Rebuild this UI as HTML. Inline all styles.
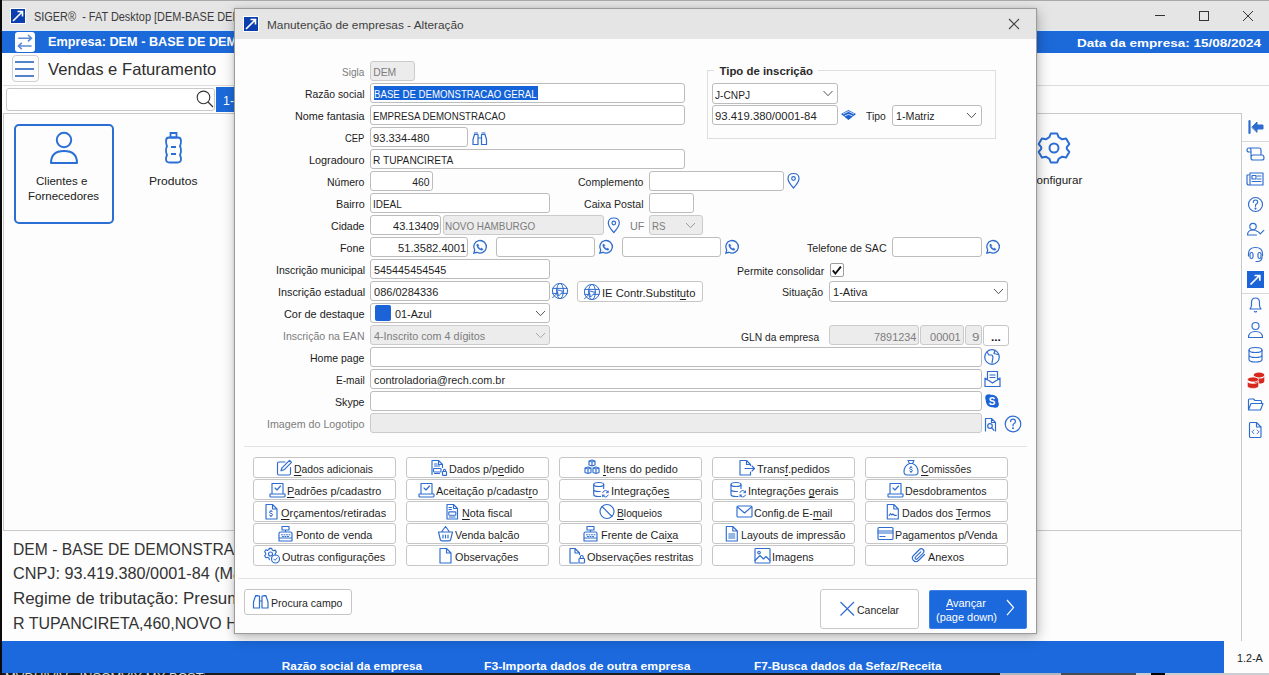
<!DOCTYPE html>
<html><head><meta charset="utf-8">
<style>
*{box-sizing:border-box;margin:0;padding:0}
html,body{width:1269px;height:675px;overflow:hidden;background:#fdfdfd;font-family:"Liberation Sans",sans-serif;color:#1f1f1f}
.a{position:absolute}
.t{position:absolute;white-space:pre;line-height:1;font-family:"Liberation Sans",sans-serif}
.t u{text-decoration-thickness:1px;text-underline-offset:1.5px}
svg.ov{position:absolute;left:0;top:0;width:1269px;height:675px;overflow:visible}
.in{position:absolute;border:1px solid #bcbcbc;border-radius:3px;background:#fff}
.dis{background:#ececec;border-color:#cbcbcb}
.btn{position:absolute;border:1px solid #c6c6c6;border-radius:3px;background:#fff}
</style></head><body>
<!-- ============ MAIN WINDOW ============ -->
<div class="a" style="left:0;top:0;width:1269px;height:31px;background:#e5e5e5;border-top:1px solid #a9a9a9"></div>
<div class="a" style="left:0;top:30px;width:1269px;height:1px;background:#d9eefa"></div>
<div class="a" style="left:0;top:31px;width:1269px;height:1px;background:#2458b4"></div>
<div class="a" style="left:0;top:31px;width:1269px;height:22px;background:#1c6ad9"></div>
<div class="a" style="left:3px;top:85px;width:1266px;height:1px;background:#dcdcdc"></div>
<div class="a" style="left:12px;top:55px;width:27px;height:27px;border:1px solid #cfcfcf;border-radius:4px;background:#fdfdfd"></div>
<div class="a" style="left:15px;top:61px;width:19px;height:2px;background:#5582cf"></div>
<div class="a" style="left:15px;top:68px;width:19px;height:2px;background:#5582cf"></div>
<div class="a" style="left:15px;top:75px;width:19px;height:2px;background:#5582cf"></div>
<div class="a" style="left:6px;top:88px;width:209px;height:23px;border:1px solid #c8c8c8;border-radius:3px;background:#fff"></div>
<div class="a" style="left:216px;top:87px;width:60px;height:25px;background:#1c6ad9"></div>
<div class="a" style="left:3px;top:113px;width:1239px;height:418px;border:1px solid #c9c9c9;background:#fdfdfd"></div>
<div class="a" style="left:14px;top:124px;width:100px;height:100px;border:2px solid #2b6fd5;border-radius:5px"></div>
<div class="a" style="left:1242px;top:141px;width:27px;height:1px;background:#d8d8d8"></div>
<div class="a" style="left:1242px;top:293px;width:27px;height:1px;background:#d8d8d8"></div>
<div class="a" style="left:1241px;top:113px;width:1px;height:528px;background:#c9c9c9"></div>
<div class="a" style="left:0;top:641px;width:1224px;height:32px;background:#1b69dc"></div>
<div class="a" style="left:1224px;top:641px;width:45px;height:32px;background:#fdfdfd"></div>
<div class="a" style="left:0;top:673px;width:1000px;height:2px;background:#1c1c1c"></div>
<div class="a" style="left:5px;top:673px;width:200px;height:2px;overflow:hidden"><span class="t" style="left:0;top:0;font-size:13px;color:#d8d8d8;transform:translateY(-2px)">MVDUIVIV - INSCMVIX MX BCSTUUS</span></div>
<div class="a" style="left:1000px;top:673px;width:61px;height:2px;background:#aeb6c4"></div>
<div class="a" style="left:1061px;top:673px;width:75px;height:2px;background:#474d55"></div>
<div class="a" style="left:1136px;top:673px;width:15px;height:2px;background:#c9cdd4"></div>
<div class="a" style="left:1151px;top:673px;width:14px;height:2px;background:#050505"></div>
<div class="a" style="left:1165px;top:673px;width:104px;height:2px;background:#c9ccd1"></div>
<div class="a" style="left:0;top:0;width:2px;height:675px;background:#0b0b0b"></div>

<svg class="ov" viewBox="0 0 1269 675">
 <!-- title icon -->
 <rect x="10.5" y="8.5" width="15" height="15" fill="#0c3fae" stroke="#fff" stroke-width="1"/>
 <path d="M13 21 L22.5 11.5 M17.5 11.5 H22.5 V16.5" stroke="#fff" stroke-width="1.6" fill="none"/>
 <!-- window controls -->
 <path d="M1155 15.5 H1165" stroke="#333" stroke-width="1"/>
 <rect x="1199.5" y="11.5" width="9" height="9" fill="none" stroke="#333" stroke-width="1"/>
 <path d="M1243 11 L1253 21 M1253 11 L1243 21" stroke="#333" stroke-width="1"/>
 <!-- swap icon -->
 <rect x="15" y="32" width="20" height="20" rx="3" fill="#fff"/>
 <path d="M18.2 38.2 H31.2 M28 35 L31.4 38.2 L28 41.4" stroke="#5b8ad8" stroke-width="1.6" fill="none"/>
 <path d="M31.6 46 H18.6 M21.8 42.8 L18.4 46 L21.8 49.2" stroke="#5b8ad8" stroke-width="1.6" fill="none"/>
 <!-- search -->
 <circle cx="203.5" cy="97.4" r="6.3" fill="none" stroke="#333" stroke-width="1.1"/>
 <path d="M208 102 L213 107" stroke="#333" stroke-width="1.2"/>
 <!-- person card icon -->
 <circle cx="64" cy="140" r="7.2" fill="none" stroke="#2b6fd5" stroke-width="2"/>
 <path d="M51 163 Q51 151 64 151 Q77 151 77 163 Z" fill="none" stroke="#2b6fd5" stroke-width="2" stroke-linejoin="round"/>
 <!-- bottle -->
 <path d="M170.5 133 h6 v4.5 h-6 z" fill="none" stroke="#2b6fd5" stroke-width="1.8"/>
 <path d="M169 137.5 h9 q3 0 3 3.5 q0 3 -1 5 q1 2 1 5 q0 2 -1 4 q1 2 1 4 q0 3.5 -3.5 3.5 h-8 q-3.5 0 -3.5 -3.5 q0 -2 1 -4 q-1 -2 -1 -4 q0 -3 1 -5 q-1 -2 -1 -5 q0 -3.5 3 -3.5 z" fill="none" stroke="#2b6fd5" stroke-width="1.8"/>
 <path d="M171 147 h5 M171 154 h5" stroke="#2b6fd5" stroke-width="1.8"/>
 <!-- gear -->
 <g transform="translate(1054 148)" fill="none" stroke="#2b6fd5" stroke-width="2" stroke-linejoin="round">
  <path d="M-3.2 -14.5 L3.2 -14.5 L4.6 -10.8 L8.2 -8.7 L12.1 -9.4 L15.3 -3.9 L12.8 -0.8 L12.8 0.8 L15.3 3.9 L12.1 9.4 L8.2 8.7 L4.6 10.8 L3.2 14.5 L-3.2 14.5 L-4.6 10.8 L-8.2 8.7 L-12.1 9.4 L-15.3 3.9 L-12.8 0.8 L-12.8 -0.8 L-15.3 -3.9 L-12.1 -9.4 L-8.2 -8.7 L-4.6 -10.8 Z"/>
  <circle r="4.5"/>
 </g>
 <!-- sidebar icons -->
 <g fill="none" stroke="#2f6ccf" stroke-width="1.15" stroke-linejoin="round" stroke-linecap="round">
  <path d="M1249.5 121 V133" stroke-width="2.2"/>
  <path d="M1252 127 L1257 122 V125 H1263 V129 H1257 V132 Z" fill="#2f6ccf" stroke-width="1"/>
  <!-- scroll -->
  <path d="M1249 148 h10 q2 0 2 2 v5 M1249 148 q-2 0 -2 2 q0 2 2 2 h2 v6 q0 2 2 2 h9 q2 0 2 -2 q0 -3 -2 -3 h-9 q-2 0 -2 3 M1249 148 q2 0 2 2 v2"/>
  <!-- newspaper -->
  <path d="M1250 173 h13 v12 h-14 q-2 0 -2 -2 v-8 h3 z M1250 176 v9 M1252 175.5 h4 v3.5 h-4 z M1257.5 176 h3.5 M1257.5 179 h3.5 M1252 181.5 h9"/>
  <!-- help -->
  <circle cx="1255.5" cy="204.5" r="7"/>
  <path d="M1253.3 202.3 q0 -2.3 2.2 -2.3 q2.2 0 2.2 2.1 q0 1.4 -1.4 2 q-0.8 0.4 -0.8 1.6 v0.6"/>
  <circle cx="1255.5" cy="208.6" r="0.5" fill="#2f6ccf"/>
  <!-- person check -->
  <circle cx="1253" cy="226.5" r="3.2"/>
  <path d="M1247.5 235 q0 -5 5.5 -5 q3 0 4.5 1.5 M1247.5 235 h9"/>
  <path d="M1258.5 232 l1.8 1.8 l3.5 -3.5"/>
  <!-- headset -->
  <path d="M1248.5 256 v-2 q0 -6.5 7 -6.5 q7 0 7 6.5 v2"/>
  <rect x="1250" y="252.5" width="3" height="6" rx="1.5"/>
  <rect x="1258" y="252.5" width="3" height="6" rx="1.5"/>
  <path d="M1262 257 q0 4 -4 4.5 h-2"/>
  <!-- bell -->
  <path d="M1250 309 q1.5 -1.5 1.5 -4 v-2.5 q0 -4.5 4 -4.5 q4 0 4 4.5 v2.5 q0 2.5 1.5 4 z M1254.5 311.5 q1 1 2 0"/>
  <!-- person -->
  <circle cx="1255.5" cy="326" r="3.5"/>
  <path d="M1248.5 337.5 q0 -6 7 -6 q7 0 7 6 z"/>
  <!-- db -->
  <ellipse cx="1255.5" cy="350" rx="6.5" ry="2.5"/>
  <path d="M1249 350 v9.5 q0 2.5 6.5 2.5 q6.5 0 6.5 -2.5 v-9.5 M1249 355 q0 2.5 6.5 2.5 q6.5 0 6.5 -2.5"/>
  <!-- folder -->
  <path d="M1248.5 410 v-10 q0 -1 1 -1 h4 l1.5 1.5 h5.5 q1 0 1 1 v2 M1248.5 410 l2.5 -6.5 h12 l-2.5 6.5 z"/>
  <!-- file code -->
  <path d="M1250.5 422.5 h6 l4.5 4.5 v9.5 q0 1 -1 1 h-9.5 q-1 0 -1 -1 v-13 q0 -1 1 -1 z M1256.5 422.5 v4.5 h4.5"/>
  <path d="M1253.8 430 l-1.8 1.8 l1.8 1.8 M1257.2 430 l1.8 1.8 l-1.8 1.8" stroke-width="1"/>
 </g>
 <!-- sidebar blue arrow -->
 <rect x="1247" y="271" width="17" height="17" fill="#1b63d6"/>
 <path d="M1250.5 284.5 L1259.5 275.5 M1254.5 275.5 H1259.8 V280.8" stroke="#fff" stroke-width="1.7" fill="none"/>
 <!-- coins -->
 <g fill="#d6281e">
  <ellipse cx="1259" cy="375" rx="5.3" ry="2.6"/>
  <path d="M1253.7 376 v5 q0 2.6 5.3 2.6 q5.3 0 5.3 -2.6 v-5 q0 2.6 -5.3 2.6 q-5.3 0 -5.3 -2.6z"/>
  <ellipse cx="1253" cy="379.5" rx="5.6" ry="2.6" stroke="#fff" stroke-width="0.8"/>
  <path d="M1247.4 380.8 v5 q0 2.6 5.6 2.6 q5.6 0 5.6 -2.6 v-5 q0 2.6 -5.6 2.6 q-5.6 0 -5.6 -2.6z" stroke="#fff" stroke-width="0.6"/>
 </g>
</svg>
<span class="t" style="left:34.10px;top:11.00px;font-size:12px;font-weight:400;color:#3b3b3b;transform:scaleX(0.9110);transform-origin:left top;">SIGER®  - FAT Desktop [DEM-BASE DEMONSTRACAO]</span>
<span class="t" style="left:48.20px;top:36.00px;font-size:12.6px;font-weight:700;color:#ffffff;transform:scaleX(1.0087);transform-origin:left top;">Empresa: DEM - BASE DE DEMONSTRACAO GERAL</span>
<span class="t" style="left:1076.90px;top:38.00px;font-size:11.2px;font-weight:700;color:#ffffff;transform:scaleX(1.2082);transform-origin:left top;">Data da empresa: 15/08/2024</span>
<span class="t" style="left:47.70px;top:61.00px;font-size:16.5px;font-weight:400;color:#2e2e2e;transform:scaleX(1.0081);transform-origin:left top;">Vendas e Faturamento</span>
<span class="t" style="left:223.10px;top:95.00px;font-size:12.4px;font-weight:400;color:#ffffff;">1-</span>
<span class="t" style="left:36.10px;top:175.00px;font-size:11.6px;font-weight:400;color:#202020;transform:scaleX(0.9949);transform-origin:left top;">Clientes e</span>
<span class="t" style="left:28.00px;top:190.00px;font-size:11.6px;font-weight:400;color:#202020;transform:scaleX(0.9938);transform-origin:left top;">Fornecedores</span>
<span class="t" style="left:148.80px;top:175.00px;font-size:11.6px;font-weight:400;color:#202020;transform:scaleX(1.0451);transform-origin:left top;">Produtos</span>
<span class="t" style="left:1028.16px;top:174.00px;font-size:11.6px;font-weight:400;color:#202020;">Configurar</span>
<span class="t" style="left:13.10px;top:542.00px;font-size:15.8px;font-weight:400;color:#333333;transform:scaleX(0.9921);transform-origin:left top;">DEM - BASE DE DEMONSTRACAO GERAL</span>
<span class="t" style="left:13.10px;top:566.00px;font-size:15.8px;font-weight:400;color:#333333;transform:scaleX(1.0273);transform-origin:left top;">CNPJ: 93.419.380/0001-84 (Matriz)</span>
<span class="t" style="left:13.10px;top:591.00px;font-size:15.8px;font-weight:400;color:#333333;transform:scaleX(1.0702);transform-origin:left top;">Regime de tributação: Presumido</span>
<span class="t" style="left:13.10px;top:616.00px;font-size:15.8px;font-weight:400;color:#333333;transform:scaleX(1.0119);transform-origin:left top;">R TUPANCIRETA,460,NOVO HAMBURGO</span>
<span class="t" style="left:281.80px;top:661.00px;font-size:11.8px;font-weight:700;color:#ffffff;">Razão social da empresa</span>
<span class="t" style="left:484.30px;top:661.00px;font-size:11.8px;font-weight:700;color:#ffffff;transform:scaleX(1.0299);transform-origin:left top;">F3-Importa dados de outra empresa</span>
<span class="t" style="left:754.10px;top:661.00px;font-size:11.8px;font-weight:700;color:#ffffff;">F7-Busca dados da Sefaz/Receita</span>
<span class="t" style="left:1236.50px;top:653.00px;font-size:10.5px;font-weight:400;color:#222222;transform:scaleX(1.0275);transform-origin:left top;">1.2-A</span>

<!-- ============ DIALOG ============ -->
<div class="a" style="left:234px;top:8px;width:803px;height:626px;border:1px solid #9b9b9b;background:#fdfdfd;box-shadow:1px 4px 12px rgba(0,0,0,.27), 0 0 3px rgba(0,0,0,.10)"></div>
<div class="a" style="left:235px;top:9px;width:801px;height:29.5px;background:#e5e5e5"></div>
<!-- group box -->
<div class="a" style="left:707px;top:70px;width:289px;height:69px;border:1px solid #dedede"></div>
<div class="a" style="left:714px;top:66px;width:104px;height:8px;background:#fdfdfd"></div>
<!-- inputs -->
<div class="in dis" style="left:370px;top:61px;width:45px;height:20px"></div>
<div class="in" style="left:370px;top:83px;width:315px;height:20px"></div>
<div class="a" style="left:374px;top:86px;width:164px;height:14px;background:#1463d8"></div>
<div class="in" style="left:370px;top:105px;width:315px;height:20px"></div>
<div class="in" style="left:370px;top:127px;width:98px;height:20px"></div>
<div class="in" style="left:370px;top:149px;width:315px;height:20px"></div>
<div class="in" style="left:370px;top:171px;width:63px;height:20px"></div>
<div class="in" style="left:649px;top:171px;width:135px;height:20px"></div>
<div class="in" style="left:370px;top:193px;width:180px;height:20px"></div>
<div class="in" style="left:649px;top:193px;width:45px;height:20px"></div>
<div class="in" style="left:370px;top:215px;width:71px;height:20px"></div>
<div class="in dis" style="left:443px;top:215px;width:161px;height:20px"></div>
<div class="in dis" style="left:649px;top:215px;width:54px;height:20px"></div>
<div class="in" style="left:370px;top:237px;width:98px;height:20px"></div>
<div class="in" style="left:496px;top:237px;width:99px;height:20px"></div>
<div class="in" style="left:622px;top:237px;width:99px;height:20px"></div>
<div class="in" style="left:892px;top:237px;width:90px;height:20px"></div>
<div class="in" style="left:370px;top:259px;width:180px;height:20px"></div>
<div class="in" style="left:830px;top:263px;width:14px;height:14px;border-radius:2px;border-color:#9d9d9d"></div>
<div class="in" style="left:370px;top:281px;width:180px;height:20px"></div>
<div class="btn" style="left:577px;top:281px;width:126px;height:21px"></div>
<div class="in" style="left:829px;top:281px;width:179px;height:21px"></div>
<div class="in" style="left:370px;top:303px;width:180px;height:20px"></div>
<div class="a" style="left:375px;top:305px;width:16px;height:16px;background:#1b63d6;border-radius:2px"></div>
<div class="in dis" style="left:370px;top:325px;width:180px;height:20px"></div>
<div class="in dis" style="left:829px;top:325px;width:90px;height:20px"></div>
<div class="in dis" style="left:920px;top:325px;width:44px;height:20px"></div>
<div class="in dis" style="left:965px;top:325px;width:17px;height:20px"></div>
<div class="btn" style="left:983px;top:325px;width:26px;height:21px"></div>
<div class="in" style="left:370px;top:347px;width:612px;height:20px"></div>
<div class="in" style="left:370px;top:369px;width:612px;height:20px"></div>
<div class="in" style="left:370px;top:391px;width:612px;height:20px"></div>
<div class="in dis" style="left:370px;top:413px;width:612px;height:20px"></div>
<!-- group box inputs -->
<div class="in" style="left:712px;top:83px;width:126px;height:21px"></div>
<div class="in" style="left:712px;top:105px;width:126px;height:20px"></div>
<div class="in" style="left:892px;top:105px;width:90px;height:21px"></div>
<!-- separators -->
<div class="a" style="left:244px;top:446px;width:783px;height:1px;background:#e3e3e3"></div>
<div class="a" style="left:238px;top:578px;width:798px;height:1px;background:#e3e3e3"></div>
<!-- button grid -->
<div class="btn" style="left:253px;top:457px;width:143px;height:21px"></div>
<div class="btn" style="left:253px;top:479px;width:143px;height:21px"></div>
<div class="btn" style="left:253px;top:501px;width:143px;height:21px"></div>
<div class="btn" style="left:253px;top:523px;width:143px;height:21px"></div>
<div class="btn" style="left:253px;top:545px;width:143px;height:21px"></div>
<div class="btn" style="left:406px;top:457px;width:143px;height:21px"></div>
<div class="btn" style="left:406px;top:479px;width:143px;height:21px"></div>
<div class="btn" style="left:406px;top:501px;width:143px;height:21px"></div>
<div class="btn" style="left:406px;top:523px;width:143px;height:21px"></div>
<div class="btn" style="left:406px;top:545px;width:143px;height:21px"></div>
<div class="btn" style="left:559px;top:457px;width:143px;height:21px"></div>
<div class="btn" style="left:559px;top:479px;width:143px;height:21px"></div>
<div class="btn" style="left:559px;top:501px;width:143px;height:21px"></div>
<div class="btn" style="left:559px;top:523px;width:143px;height:21px"></div>
<div class="btn" style="left:559px;top:545px;width:143px;height:21px"></div>
<div class="btn" style="left:712px;top:457px;width:143px;height:21px"></div>
<div class="btn" style="left:712px;top:479px;width:143px;height:21px"></div>
<div class="btn" style="left:712px;top:501px;width:143px;height:21px"></div>
<div class="btn" style="left:712px;top:523px;width:143px;height:21px"></div>
<div class="btn" style="left:712px;top:545px;width:143px;height:21px"></div>
<div class="btn" style="left:865px;top:457px;width:143px;height:21px"></div>
<div class="btn" style="left:865px;top:479px;width:143px;height:21px"></div>
<div class="btn" style="left:865px;top:501px;width:143px;height:21px"></div>
<div class="btn" style="left:865px;top:523px;width:143px;height:21px"></div>
<div class="btn" style="left:865px;top:545px;width:143px;height:21px"></div>
<div class="btn" style="left:244px;top:589px;width:108px;height:26px"></div>
<div class="btn" style="left:820px;top:589px;width:99px;height:40px;border-color:#c9c9c9"></div>
<div class="a" style="left:928.5px;top:590px;width:98px;height:39px;background:#1b69dc;border-radius:2px;border:1px solid #3f82e4"></div>

<svg class="ov" viewBox="0 0 1269 675">
 <!-- dialog title icon -->
 <rect x="243.5" y="16.5" width="15" height="15" fill="#0c3fae" stroke="#fff" stroke-width="1"/>
 <path d="M246 29 L255.5 19.5 M250.5 19.5 H255.5 V24.5" stroke="#fff" stroke-width="1.6" fill="none"/>
 <path d="M1009 19 L1019 29 M1019 19 L1009 29" stroke="#444" stroke-width="1.1"/>
 <!-- chevrons -->
 <g fill="none" stroke="#555" stroke-width="1">
  <path d="M823.5 91 l4.5 4.7 l4.5 -4.7"/>
  <path d="M967 113 l4.5 4.7 l4.5 -4.7"/>
  <path d="M686 223 l4.5 4.7 l4.5 -4.7" stroke="#999"/>
  <path d="M994 289 l4.5 4.7 l4.5 -4.7"/>
  <path d="M536 311 l4.5 4.7 l4.5 -4.7"/>
  <path d="M536 333 l4.5 4.7 l4.5 -4.7" stroke="#aaa"/>
 </g>
 <!-- check -->
 <path d="M832.8 270.3 l2.6 3.2 l5.5 -6.8" fill="none" stroke="#111" stroke-width="1.9"/>
 <!-- dialog field icons -->
 <g fill="none" stroke="#2f6ccf" stroke-width="1.2" stroke-linejoin="round" stroke-linecap="round">
  <!-- binoculars CEP -->
  <path d="M474.5 133 h3 M482 133 h3 M473 144.5 v-5 l1.5 -5 h3.5 v10 z M481.5 144.5 v-10 h3.5 l1.5 5 v5 z M478 138 h3.5"/>
  <!-- pins -->
  <path d="M793.5 188 q-5.5 -6 -5.5 -9.5 q0 -5 5.5 -5 q5.5 0 5.5 5 q0 3.5 -5.5 9.5 z"/><circle cx="793.5" cy="178.5" r="1.8"/>
  <path d="M613.8 232.5 q-5.5 -6 -5.5 -9.5 q0 -5 5.5 -5 q5.5 0 5.5 5 q0 3.5 -5.5 9.5 z"/><circle cx="613.8" cy="223" r="1.8"/>
  <!-- globes -->
  <g transform="translate(560 291)" stroke-width="1"><circle r="7.6"/><ellipse rx="3.4" ry="7.6"/><path d="M-7.2 -2.6 h14.4 M-7.2 2.4 h14.4"/><path d="M-2.8 -1.2 l6 1.6 l-4.4 4.4 z" fill="#fdfdfd"/><path d="M-7.5 6.8 l5 -5"/></g>
  <g transform="translate(592 292)" stroke-width="1"><circle r="7.6"/><ellipse rx="3.4" ry="7.6"/><path d="M-7.2 -2.6 h14.4 M-7.2 2.4 h14.4"/><path d="M-2.8 -1.2 l6 1.6 l-4.4 4.4 z" fill="#fdfdfd"/><path d="M-7.5 6.8 l5 -5"/></g>
  <g transform="translate(992 357)"><circle r="7.3"/><path d="M-5 -5 l2 3 l3 0 l1 2 l-1 6 M3 -6.5 l-1 3 l4 1"/></g>
  <!-- mail -->
  <path d="M985 378 l7.5 5 l7.5 -5 v8.5 h-15 z M987.5 380 v-8.5 h10 v8.5 M990 375 h5 M990 377.5 h5"/>
  <!-- file search -->
  <path d="M985.5 431 v-12.5 h6 l4 4 v8.5 M991.5 418.5 v4 h4"/>
  <circle cx="990" cy="426" r="2.3"/><path d="M991.7 427.8 l2.3 2.5"/>
  <circle cx="1013" cy="424" r="7.8"/>
  <path d="M1010.6 421.6 q0 -2.4 2.4 -2.4 q2.4 0 2.4 2.3 q0 1.5 -1.5 2.2 q-0.9 0.4 -0.9 1.7 v0.6"/>
  <circle cx="1013" cy="428.2" r="0.4" fill="#2f6ccf"/>
  <!-- binoculars procura -->
  <path d="M255.5 595.5 h2.5 M263.5 595.5 h2.5 M253.5 608 v-6 l2 -6 h4 v12 z M262 608 v-12 h4 l2 6 v6 z M259.5 601 h2.5"/>
  <!-- receita -->
 </g>
 <!-- whatsapp icons -->
 <g fill="none" stroke="#2f6ccf" stroke-width="1.3">
  <g transform="translate(479 247.3)"><path d="M-5.2 5.8 l0.9 -3 a6.3 6.3 0 1 1 2.3 2.2 z"/><path d="M-2.3 -2.4 q0.5 -1 1.2 -0.8 l1 1.6 l-0.7 0.9 q0.8 1.5 2.2 2.2 l0.9 -0.7 l1.6 1 q0.1 0.8 -0.9 1.2 q-4.6 -0.6 -5.3 -5.4 z" fill="#2f6ccf" stroke-width="0.5"/></g>
  <g transform="translate(605 247.3)"><path d="M-5.2 5.8 l0.9 -3 a6.3 6.3 0 1 1 2.3 2.2 z"/><path d="M-2.3 -2.4 q0.5 -1 1.2 -0.8 l1 1.6 l-0.7 0.9 q0.8 1.5 2.2 2.2 l0.9 -0.7 l1.6 1 q0.1 0.8 -0.9 1.2 q-4.6 -0.6 -5.3 -5.4 z" fill="#2f6ccf" stroke-width="0.5"/></g>
  <g transform="translate(731 247.3)"><path d="M-5.2 5.8 l0.9 -3 a6.3 6.3 0 1 1 2.3 2.2 z"/><path d="M-2.3 -2.4 q0.5 -1 1.2 -0.8 l1 1.6 l-0.7 0.9 q0.8 1.5 2.2 2.2 l0.9 -0.7 l1.6 1 q0.1 0.8 -0.9 1.2 q-4.6 -0.6 -5.3 -5.4 z" fill="#2f6ccf" stroke-width="0.5"/></g>
  <g transform="translate(992 247.3)"><path d="M-5.2 5.8 l0.9 -3 a6.3 6.3 0 1 1 2.3 2.2 z"/><path d="M-2.3 -2.4 q0.5 -1 1.2 -0.8 l1 1.6 l-0.7 0.9 q0.8 1.5 2.2 2.2 l0.9 -0.7 l1.6 1 q0.1 0.8 -0.9 1.2 q-4.6 -0.6 -5.3 -5.4 z" fill="#2f6ccf" stroke-width="0.5"/></g>
 </g>
 <!-- skype -->
 <g transform="translate(992 401)">
  <circle cx="-3.2" cy="-3.2" r="3.6" fill="#1b63d6"/><circle cx="3.2" cy="3.2" r="3.6" fill="#1b63d6"/><circle r="6.2" fill="#1b63d6"/>
  <text x="0" y="3.6" font-family="Liberation Sans" font-weight="700" font-size="10" fill="#fff" text-anchor="middle">S</text>
 </g>
 <!-- receita icon -->
 <path d="M841 114 l7.5 -4 l7.5 4 l-7.5 6 z" fill="#1b5fd0"/>
 <path d="M843 114 l5.5 -2.6 l5.5 2.6 M844.5 116 l4 -1.6 l4 1.6" stroke="#fff" stroke-width="0.8" fill="none"/>
 <!-- cancel X -->
 <path d="M840.5 602 L854 615.5 M854 602 L840.5 615.5" stroke="#2f6ccf" stroke-width="1.2"/>
 <!-- avancar chevron -->
 <path d="M1007 600 L1013.5 607.6 L1007 615.2" stroke="#fff" stroke-width="1.2" fill="none"/>
 <g transform="translate(276 459.5)" fill="none" stroke="#2f6ccf" stroke-width="1.15" stroke-linejoin="round" stroke-linecap="round"><path d="M9 2.5 H3 q-1.5 0 -1.5 1.5 v10 q0 1.5 1.5 1.5 h10 q1.5 0 1.5 -1.5 v-6"/><path d="M13.5 0.8 l2 2 l-7.5 7.5 l-3 1 l1 -3 z"/></g>
<g transform="translate(269 481.5)" fill="none" stroke="#2f6ccf" stroke-width="1.15" stroke-linejoin="round" stroke-linecap="round"><path d="M3 12 v-10 h11 v10 M1 12.5 h15 v2 q0 1 -1 1 h-13 q-1 0 -1 -1 z M6 6.5 l2 2 l3.5 -4"/></g>
<g transform="translate(265 503.5)" fill="none" stroke="#2f6ccf" stroke-width="1.15" stroke-linejoin="round" stroke-linecap="round"><path d="M1 1 h6.5 l4.5 4.5 v10 h-11 z M7.5 1 v4.5 h4.5"/><path d="M7.5 8.3 q-0.5 -0.8 -1.5 -0.8 q-1.5 0 -1.5 1.2 q0 1 1.5 1.2 q1.5 0.2 1.5 1.3 q0 1.2 -1.5 1.2 q-1 0 -1.6 -0.8 M6 6.8 v0.7 M6 12.4 v0.8" stroke-width="1"/></g>
<g transform="translate(278 525.5)" fill="none" stroke="#2f6ccf" stroke-width="1.15" stroke-linejoin="round" stroke-linecap="round"><path d="M4 1 h7 v3.5 h-7 z M7.5 4.5 v2 M1 8 q0 -1.5 1.5 -1.5 h10 q1.5 0 1.5 1.5 v7.5 h-13 z M1 12.5 h13"/><path d="M3.5 9.3 h1 M6 9.3 h1 M8.5 9.3 h1 M11 9.3 h1 M4.5 11 h1 M7 11 h1 M9.5 11 h1" stroke-width="1"/></g>
<g transform="translate(264 547.5)" fill="none" stroke="#2f6ccf" stroke-width="1.15" stroke-linejoin="round" stroke-linecap="round"><circle cx="6.5" cy="6.5" r="2"/><path d="M5.3 0.8 h2.4 l0.5 1.6 l1.5 0.8 l1.5 -0.6 l1.2 2 l-1.1 1.2 v1.5 M1.7 10 l-1 -1.8 l1 -1.2 v-1.5 l-1 -1.2 l1.2 -2 l1.5 0.6 l1.5 -0.8 l0.4 -1.4 M2 10.2 l1.4 -0.4 l1.5 0.8 l0.5 1.6"/><circle cx="11.5" cy="11.5" r="4"/><path d="M9.7 11.5 l1.3 1.3 l2.2 -2.4" stroke-width="1"/></g>
<g transform="translate(431 459.5)" fill="none" stroke="#2f6ccf" stroke-width="1.15" stroke-linejoin="round" stroke-linecap="round"><path d="M1 15 v-14 h6.5 l4 4 v3 M7.5 1 v4 h4 M3.5 4.5 h2.5 M3.5 6.5 h5"/><rect x="2.5" y="9" width="7.5" height="3.5" rx="0.8"/><path d="M3.5 14 h5"/><rect x="11.5" y="12" width="4" height="3.8" rx="0.6"/><path d="M12.5 12 v-1.3 q0 -1 1 -1 q1 0 1 1 v1.3"/></g>
<g transform="translate(418 481.5)" fill="none" stroke="#2f6ccf" stroke-width="1.15" stroke-linejoin="round" stroke-linecap="round"><path d="M3 12 v-10 h11 v10 M1 12.5 h15 v2 q0 1 -1 1 h-13 q-1 0 -1 -1 z M6 6.5 l2 2 l3.5 -4"/></g>
<g transform="translate(446 503.5)" fill="none" stroke="#2f6ccf" stroke-width="1.15" stroke-linejoin="round" stroke-linecap="round"><path d="M1 1 h6.5 l4 4 v10.5 h-10.5 z M7.5 1 v4 h4 M3 4 h2.5 M3 6 h2.5"/><rect x="2.8" y="8.3" width="7" height="3.4" rx="0.8"/><path d="M3.5 13.5 h5.5"/></g>
<g transform="translate(437.5 525.5)" fill="none" stroke="#2f6ccf" stroke-width="1.15" stroke-linejoin="round" stroke-linecap="round"><path d="M1 6.5 h14 l-1.8 7.5 q-0.3 1.3 -1.6 1.3 h-7.2 q-1.3 0 -1.6 -1.3 z M4 6.5 l4 -5.5 l4 5.5 M5.5 9.5 v3 M8 9.5 v3 M10.5 9.5 v3"/></g>
<g transform="translate(439 547.5)" fill="none" stroke="#2f6ccf" stroke-width="1.15" stroke-linejoin="round" stroke-linecap="round"><path d="M1 1 h6.5 l4.5 4.5 v10 h-11 z M7.5 1 v4.5 h4.5"/></g>
<g transform="translate(584 459.5)" fill="none" stroke="#2f6ccf" stroke-width="1.15" stroke-linejoin="round" stroke-linecap="round"><path d="M5 1.5 l3 -1 l3 1 v4 l-3 1 l-3 -1 z M5 1.5 l3 1 l3 -1 M8 2.5 v4 M1 8.5 l3 -1 l3 1 v4.5 l-3 1 l-3 -1 z M1 8.5 l3 1 l3 -1 M4 9.5 v4.5 M9 8.5 l3 -1 l3 1 v4.5 l-3 1 l-3 -1 z M9 8.5 l3 1 l3 -1 M12 9.5 v4.5"/></g>
<g transform="translate(592.7 481.5)" fill="none" stroke="#2f6ccf" stroke-width="1.15" stroke-linejoin="round" stroke-linecap="round"><ellipse cx="6" cy="3" rx="5" ry="2"/><path d="M1 3 v10 q0 2 5 2 h2 M11 3 v4 M1 8 q0 2 5 2 h1.5"/><path d="M10 11 q0.8 -2 2.8 -2 q2 0 2.7 2 M15.5 13.5 q-0.8 2 -2.8 2 q-2 0 -2.7 -2 M15.5 9.5 v1.7 h-1.7 M10 15.3 v-1.7 h1.7" stroke-width="1"/></g>
<g transform="translate(599 503.5)" fill="none" stroke="#2f6ccf" stroke-width="1.15" stroke-linejoin="round" stroke-linecap="round"><circle cx="8" cy="8" r="7"/><path d="M3 3 l10 10"/></g>
<g transform="translate(583 525.5)" fill="none" stroke="#2f6ccf" stroke-width="1.15" stroke-linejoin="round" stroke-linecap="round"><path d="M4 1 h7 v3.5 h-7 z M7.5 4.5 v2 M1 8 q0 -1.5 1.5 -1.5 h10 q1.5 0 1.5 1.5 v7.5 h-13 z M1 12.5 h13"/><path d="M3.5 9.3 h1 M6 9.3 h1 M8.5 9.3 h1 M11 9.3 h1 M4.5 11 h1 M7 11 h1 M9.5 11 h1" stroke-width="1"/></g>
<g transform="translate(569 547.5)" fill="none" stroke="#2f6ccf" stroke-width="1.15" stroke-linejoin="round" stroke-linecap="round"><path d="M10.5 7 v-1.5 l-4.5 -4.5 h-5 v14.5 h8 M6 1 v4.5 h4.5"/><rect x="10" y="11" width="5.5" height="4.5" rx="0.8"/><path d="M11.3 11 v-1.5 q0 -1.5 1.45 -1.5 q1.45 0 1.45 1.5 v1.5"/></g>
<g transform="translate(739 459.5)" fill="none" stroke="#2f6ccf" stroke-width="1.15" stroke-linejoin="round" stroke-linecap="round"><path d="M11.5 6 v-1 l-4 -4 h-6.5 v14.5 h10.5 v-3 M7.5 1 v4 h4"/><path d="M6 9 h9.5 M13 6.5 l2.5 2.5 l-2.5 2.5"/></g>
<g transform="translate(730 481.5)" fill="none" stroke="#2f6ccf" stroke-width="1.15" stroke-linejoin="round" stroke-linecap="round"><ellipse cx="6" cy="3" rx="5" ry="2"/><path d="M1 3 v10 q0 2 5 2 h2 M11 3 v4 M1 8 q0 2 5 2 h1.5"/><path d="M10 11 q0.8 -2 2.8 -2 q2 0 2.7 2 M15.5 13.5 q-0.8 2 -2.8 2 q-2 0 -2.7 -2 M15.5 9.5 v1.7 h-1.7 M10 15.3 v-1.7 h1.7" stroke-width="1"/></g>
<g transform="translate(736 503.5)" fill="none" stroke="#2f6ccf" stroke-width="1.15" stroke-linejoin="round" stroke-linecap="round"><rect x="1" y="2.5" width="15" height="11" rx="1"/><path d="M1.5 3.5 l7 6 l7 -6"/></g>
<g transform="translate(725.3 525.5)" fill="none" stroke="#2f6ccf" stroke-width="1.15" stroke-linejoin="round" stroke-linecap="round"><path d="M1 1 h6.5 l4.5 4.5 v10 h-11 z M7.5 1 v4.5 h4.5 M3.5 8.5 h6 M3.5 10.5 h6 M3.5 12.5 h6"/></g>
<g transform="translate(754 547.5)" fill="none" stroke="#2f6ccf" stroke-width="1.15" stroke-linejoin="round" stroke-linecap="round"><rect x="1" y="1" width="15" height="14.5" rx="0.8"/><circle cx="5" cy="5" r="1.3"/><path d="M1 13 l5 -5 l3.5 3.5 l2.5 -2.5 l4 4"/></g>
<g transform="translate(903 459.5)" fill="none" stroke="#2f6ccf" stroke-width="1.15" stroke-linejoin="round" stroke-linecap="round"><path d="M5 1 h6 l-1.5 3 q5.5 2.5 5.5 8 q0 3.5 -3 3.5 h-8 q-3 0 -3 -3.5 q0 -5.5 5.5 -8 z M6.5 4 h3"/><path d="M9.3 8.5 q-0.4 -0.8 -1.3 -0.8 q-1.4 0 -1.4 1.1 q0 0.9 1.4 1.1 q1.4 0.2 1.4 1.2 q0 1.1 -1.4 1.1 q-1 0 -1.4 -0.8 M8 6.8 v0.9 M8 12.3 v0.8" stroke-width="1"/></g>
<g transform="translate(887 481.5)" fill="none" stroke="#2f6ccf" stroke-width="1.15" stroke-linejoin="round" stroke-linecap="round"><path d="M3 12 v-10 h11 v10 M1 12.5 h15 v2 q0 1 -1 1 h-13 q-1 0 -1 -1 z M6 6.5 l2 2 l3.5 -4"/></g>
<g transform="translate(886.3 503.5)" fill="none" stroke="#2f6ccf" stroke-width="1.15" stroke-linejoin="round" stroke-linecap="round"><path d="M1 1 h6.5 l4.5 4.5 v10 h-11 z M7.5 1 v4.5 h4.5 M2.8 12 l1.5 -2 l1 1.5 l1.3 -1 l1.5 1.3 h2"/></g>
<g transform="translate(877 525.5)" fill="none" stroke="#2f6ccf" stroke-width="1.15" stroke-linejoin="round" stroke-linecap="round"><rect x="1" y="2" width="15" height="12" rx="1"/><path d="M1 5.5 h15 M1 7.5 h15 M3 11 h2 M6 11 h2" stroke-width="1.1"/></g>
<g transform="translate(911 547.5)" fill="none" stroke="#2f6ccf" stroke-width="1.15" stroke-linejoin="round" stroke-linecap="round"><path d="M13.5 7 l-6 6 q-2.5 2.5 -5 0 q-2.5 -2.5 0 -5 l6 -6 q1.8 -1.8 3.6 0 q1.8 1.8 0 3.6 l-5.8 5.8 q-0.9 0.9 -1.8 0 q-0.9 -0.9 0 -1.8 l5.3 -5.3"/></g>
</svg>
<span class="t" style="left:267.30px;top:19.00px;font-size:11.6px;font-weight:400;color:#3f3f3f;transform:scaleX(1.0207);transform-origin:left top;">Manutenção de empresas - Alteração</span>
<span class="t" style="left:342.30px;top:68.00px;font-size:10.4px;font-weight:400;color:#7c7c7c;transform:scaleX(0.9650);transform-origin:left top;">Sigla</span>
<span class="t" style="left:305.00px;top:90.00px;font-size:10.4px;font-weight:400;color:#202020;">Razão social</span>
<span class="t" style="left:295.00px;top:112.00px;font-size:10.4px;font-weight:400;color:#202020;transform:scaleX(1.0388);transform-origin:left top;">Nome fantasia</span>
<span class="t" style="left:345.20px;top:134.00px;font-size:10.4px;font-weight:400;color:#202020;transform:scaleX(0.9076);transform-origin:left top;">CEP</span>
<span class="t" style="left:309.10px;top:156.00px;font-size:10.4px;font-weight:400;color:#202020;transform:scaleX(1.0441);transform-origin:left top;">Logradouro</span>
<span class="t" style="left:327.20px;top:178.00px;font-size:10.4px;font-weight:400;color:#202020;transform:scaleX(1.0117);transform-origin:left top;">Número</span>
<span class="t" style="left:335.90px;top:200.00px;font-size:10.4px;font-weight:400;color:#202020;transform:scaleX(1.0354);transform-origin:left top;">Bairro</span>
<span class="t" style="left:331.10px;top:222.00px;font-size:10.4px;font-weight:400;color:#202020;transform:scaleX(1.0171);transform-origin:left top;">Cidade</span>
<span class="t" style="left:340.10px;top:244.00px;font-size:10.4px;font-weight:400;color:#202020;transform:scaleX(1.0343);transform-origin:left top;">Fone</span>
<span class="t" style="left:275.50px;top:266.00px;font-size:10.4px;font-weight:400;color:#202020;transform:scaleX(1.0084);transform-origin:left top;">Inscrição municipal</span>
<span class="t" style="left:277.50px;top:288.00px;font-size:10.4px;font-weight:400;color:#202020;transform:scaleX(1.0400);transform-origin:left top;">Inscrição estadual</span>
<span class="t" style="left:284.10px;top:310.00px;font-size:10.4px;font-weight:400;color:#202020;transform:scaleX(1.0476);transform-origin:left top;">Cor de destaque</span>
<span class="t" style="left:283.10px;top:332.00px;font-size:10.4px;font-weight:400;color:#7c7c7c;transform:scaleX(1.0152);transform-origin:left top;">Inscrição na EAN</span>
<span class="t" style="left:310.20px;top:354.00px;font-size:10.4px;font-weight:400;color:#202020;transform:scaleX(1.0124);transform-origin:left top;">Home page</span>
<span class="t" style="left:335.90px;top:376.00px;font-size:10.4px;font-weight:400;color:#202020;transform:scaleX(0.9744);transform-origin:left top;">E-mail</span>
<span class="t" style="left:335.10px;top:398.00px;font-size:10.4px;font-weight:400;color:#202020;transform:scaleX(1.0211);transform-origin:left top;">Skype</span>
<span class="t" style="left:267.20px;top:420.00px;font-size:10.4px;font-weight:400;color:#7c7c7c;transform:scaleX(1.0281);transform-origin:left top;">Imagem do Logotipo</span>
<span class="t" style="left:578.10px;top:178.00px;font-size:10.4px;font-weight:400;color:#1f1f1f;transform:scaleX(1.0110);transform-origin:left top;">Complemento</span>
<span class="t" style="left:584.00px;top:200.00px;font-size:10.4px;font-weight:400;color:#1f1f1f;transform:scaleX(1.0198);transform-origin:left top;">Caixa Postal</span>
<span class="t" style="left:629.50px;top:222.00px;font-size:10.4px;font-weight:400;color:#7c7c7c;transform:scaleX(1.0390);transform-origin:left top;">UF</span>
<span class="t" style="left:806.70px;top:244.00px;font-size:10.4px;font-weight:400;color:#1f1f1f;transform:scaleX(1.0207);transform-origin:left top;">Telefone de SAC</span>
<span class="t" style="left:736.80px;top:267.00px;font-size:10.4px;font-weight:400;color:#1f1f1f;transform:scaleX(1.0132);transform-origin:left top;">Permite consolidar</span>
<span class="t" style="left:782.20px;top:288.00px;font-size:10.4px;font-weight:400;color:#1f1f1f;transform:scaleX(1.0164);transform-origin:left top;">Situação</span>
<span class="t" style="left:741.10px;top:333.00px;font-size:10.4px;font-weight:400;color:#1f1f1f;transform:scaleX(0.9870);transform-origin:left top;">GLN da empresa</span>
<span class="t" style="left:866.20px;top:112.00px;font-size:10.4px;font-weight:400;color:#1f1f1f;transform:scaleX(0.9935);transform-origin:left top;">Tipo</span>
<span class="t" style="left:719.50px;top:66.00px;font-size:11.4px;font-weight:700;color:#2a2a2a;">Tipo de inscrição</span>
<span class="t" style="left:373.20px;top:68.00px;font-size:10.4px;font-weight:400;color:#7c7c7c;">DEM</span>
<span class="t" style="left:373.70px;top:90.00px;font-size:10.4px;font-weight:400;color:#ffffff;transform:scaleX(0.9294);transform-origin:left top;">BASE DE DEMONSTRACAO GERAL</span>
<span class="t" style="left:373.40px;top:112.00px;font-size:10.4px;font-weight:400;color:#1f1f1f;transform:scaleX(0.9329);transform-origin:left top;">EMPRESA DEMONSTRACAO</span>
<span class="t" style="left:373.00px;top:134.00px;font-size:10.4px;font-weight:400;color:#1f1f1f;transform:scaleX(1.0727);transform-origin:left top;">93.334-480</span>
<span class="t" style="left:373.00px;top:156.00px;font-size:10.4px;font-weight:400;color:#1f1f1f;transform:scaleX(0.9795);transform-origin:left top;">R TUPANCIRETA</span>
<span class="t" style="left:412.16px;top:178.00px;font-size:10.4px;font-weight:400;color:#1f1f1f;">460</span>
<span class="t" style="left:373.00px;top:200.00px;font-size:10.4px;font-weight:400;color:#1f1f1f;transform:scaleX(0.9590);transform-origin:left top;">IDEAL</span>
<span class="t" style="left:392.70px;top:222.00px;font-size:10.4px;font-weight:400;color:#1f1f1f;transform:scaleX(1.0613);transform-origin:left top;">43.13409</span>
<span class="t" style="left:445.20px;top:222.00px;font-size:10.4px;font-weight:400;color:#7c7c7c;transform:scaleX(0.9516);transform-origin:left top;">NOVO HAMBURGO</span>
<span class="t" style="left:652.10px;top:222.00px;font-size:10.4px;font-weight:400;color:#7c7c7c;transform:scaleX(0.9351);transform-origin:left top;">RS</span>
<span class="t" style="left:397.90px;top:244.00px;font-size:10.4px;font-weight:400;color:#1f1f1f;transform:scaleX(1.0730);transform-origin:left top;">51.3582.4001</span>
<span class="t" style="left:373.50px;top:266.00px;font-size:10.4px;font-weight:400;color:#1f1f1f;transform:scaleX(1.0424);transform-origin:left top;">545445454545</span>
<span class="t" style="left:373.50px;top:288.00px;font-size:10.4px;font-weight:400;color:#1f1f1f;transform:scaleX(1.0612);transform-origin:left top;">086/0284336</span>
<span class="t" style="left:394.90px;top:310.00px;font-size:10.4px;font-weight:400;color:#1f1f1f;transform:scaleX(1.0416);transform-origin:left top;">01-Azul</span>
<span class="t" style="left:373.50px;top:332.00px;font-size:10.4px;font-weight:400;color:#7c7c7c;transform:scaleX(1.0342);transform-origin:left top;">4-Inscrito com 4 dígitos</span>
<span class="t" style="left:373.50px;top:376.00px;font-size:10.4px;font-weight:400;color:#1f1f1f;transform:scaleX(1.0440);transform-origin:left top;">controladoria@rech.com.br</span>
<span class="t" style="left:714.90px;top:91.00px;font-size:10.4px;font-weight:400;color:#1f1f1f;transform:scaleX(0.9777);transform-origin:left top;">J-CNPJ</span>
<span class="t" style="left:714.90px;top:112.00px;font-size:10.4px;font-weight:400;color:#1f1f1f;transform:scaleX(1.0932);transform-origin:left top;">93.419.380/0001-84</span>
<span class="t" style="left:896.20px;top:112.00px;font-size:10.4px;font-weight:400;color:#1f1f1f;transform:scaleX(1.0285);transform-origin:left top;">1-Matriz</span>
<span class="t" style="left:833.10px;top:288.00px;font-size:10.4px;font-weight:400;color:#1f1f1f;transform:scaleX(1.0605);transform-origin:left top;">1-Ativa</span>
<span class="t" style="left:873.60px;top:333.00px;font-size:10.4px;font-weight:400;color:#7c7c7c;transform:scaleX(1.0481);transform-origin:left top;">7891234</span>
<span class="t" style="left:929.90px;top:333.00px;font-size:10.4px;font-weight:400;color:#7c7c7c;transform:scaleX(1.0621);transform-origin:left top;">00001</span>
<span class="t" style="left:971.50px;top:333.00px;font-size:10.4px;font-weight:400;color:#7c7c7c;transform:scaleX(1.2800);transform-origin:left top;">9</span>
<span class="t" style="left:601.90px;top:289.00px;font-size:10.4px;font-weight:400;color:#1f1f1f;transform:scaleX(1.0780);transform-origin:left top;">IE Contr.Substit<u>u</u>to</span>
<span class="t" style="left:293.90px;top:465.00px;font-size:10.4px;font-weight:400;color:#1f1f1f;"><u>D</u>ados adicionais</span>
<span class="t" style="left:287.10px;top:487.00px;font-size:10.4px;font-weight:400;color:#1f1f1f;transform:scaleX(1.0465);transform-origin:left top;"><u>P</u>adrões p/cadastro</span>
<span class="t" style="left:281.10px;top:509.00px;font-size:10.4px;font-weight:400;color:#1f1f1f;transform:scaleX(1.0520);transform-origin:left top;"><u>O</u>rçamentos/retiradas</span>
<span class="t" style="left:295.90px;top:531.00px;font-size:10.4px;font-weight:400;color:#1f1f1f;transform:scaleX(1.0495);transform-origin:left top;">Ponto de venda</span>
<span class="t" style="left:282.00px;top:553.00px;font-size:10.4px;font-weight:400;color:#1f1f1f;transform:scaleX(1.0459);transform-origin:left top;">Outras configurações</span>
<span class="t" style="left:448.90px;top:465.00px;font-size:10.4px;font-weight:400;color:#1f1f1f;transform:scaleX(1.0344);transform-origin:left top;">Dados p/p<u>e</u>dido</span>
<span class="t" style="left:436.20px;top:487.00px;font-size:10.4px;font-weight:400;color:#1f1f1f;transform:scaleX(1.0521);transform-origin:left top;">Aceitação p/cadast<u>r</u>o</span>
<span class="t" style="left:462.10px;top:509.00px;font-size:10.4px;font-weight:400;color:#1f1f1f;transform:scaleX(1.0347);transform-origin:left top;"><u>N</u>ota fiscal</span>
<span class="t" style="left:455.20px;top:531.00px;font-size:10.4px;font-weight:400;color:#1f1f1f;transform:scaleX(1.0225);transform-origin:left top;">Venda ba<u>l</u>cão</span>
<span class="t" style="left:454.90px;top:553.00px;font-size:10.4px;font-weight:400;color:#1f1f1f;transform:scaleX(1.0373);transform-origin:left top;">Observações</span>
<span class="t" style="left:602.50px;top:465.00px;font-size:10.4px;font-weight:400;color:#1f1f1f;transform:scaleX(1.0512);transform-origin:left top;"><u>I</u>tens do pedido</span>
<span class="t" style="left:611.30px;top:487.00px;font-size:10.4px;font-weight:400;color:#1f1f1f;transform:scaleX(1.0753);transform-origin:left top;">Integraçõe<u>s</u></span>
<span class="t" style="left:617.30px;top:509.00px;font-size:10.4px;font-weight:400;color:#1f1f1f;transform:scaleX(0.9882);transform-origin:left top;"><u>B</u>loqueios</span>
<span class="t" style="left:600.80px;top:531.00px;font-size:10.4px;font-weight:400;color:#1f1f1f;transform:scaleX(1.0468);transform-origin:left top;">Frente de Cai<u>x</u>a</span>
<span class="t" style="left:587.10px;top:553.00px;font-size:10.4px;font-weight:400;color:#1f1f1f;transform:scaleX(1.0538);transform-origin:left top;">Observações restritas</span>
<span class="t" style="left:756.70px;top:465.00px;font-size:10.4px;font-weight:400;color:#1f1f1f;transform:scaleX(1.0664);transform-origin:left top;">Trans<u>f</u>.pedidos</span>
<span class="t" style="left:748.10px;top:487.00px;font-size:10.4px;font-weight:400;color:#1f1f1f;transform:scaleX(1.0598);transform-origin:left top;">Integrações <u>g</u>erais</span>
<span class="t" style="left:754.10px;top:509.00px;font-size:10.4px;font-weight:400;color:#1f1f1f;transform:scaleX(1.0194);transform-origin:left top;">Config.de E-<u>m</u>ail</span>
<span class="t" style="left:740.80px;top:531.00px;font-size:10.4px;font-weight:400;color:#1f1f1f;transform:scaleX(1.0270);transform-origin:left top;">Layouts de impressão</span>
<span class="t" style="left:772.00px;top:553.00px;font-size:10.4px;font-weight:400;color:#1f1f1f;transform:scaleX(1.0462);transform-origin:left top;">Imagens</span>
<span class="t" style="left:921.10px;top:465.00px;font-size:10.4px;font-weight:400;color:#1f1f1f;transform:scaleX(0.9768);transform-origin:left top;"><u>C</u>omissões</span>
<span class="t" style="left:905.10px;top:487.00px;font-size:10.4px;font-weight:400;color:#1f1f1f;transform:scaleX(1.0298);transform-origin:left top;">Desdobramentos</span>
<span class="t" style="left:901.60px;top:509.00px;font-size:10.4px;font-weight:400;color:#1f1f1f;transform:scaleX(1.0285);transform-origin:left top;">Dados dos <u>T</u>ermos</span>
<span class="t" style="left:894.80px;top:531.00px;font-size:10.4px;font-weight:400;color:#1f1f1f;transform:scaleX(1.0314);transform-origin:left top;">Pagamentos p/Venda</span>
<span class="t" style="left:928.40px;top:553.00px;font-size:10.4px;font-weight:400;color:#1f1f1f;transform:scaleX(1.0441);transform-origin:left top;">Anexos</span>
<span class="t" style="left:271.00px;top:599.00px;font-size:10.4px;font-weight:400;color:#1f1f1f;transform:scaleX(1.0146);transform-origin:left top;">Procura campo</span>
<span class="t" style="left:857.00px;top:606.00px;font-size:10.4px;font-weight:400;color:#1f1f1f;transform:scaleX(1.0122);transform-origin:left top;">Cancelar</span>
<span class="t" style="left:946.30px;top:599.00px;font-size:10.4px;font-weight:400;color:#ffffff;transform:scaleX(1.0491);transform-origin:left top;"><u>A</u>vançar</span>
<span class="t" style="left:936.30px;top:613.00px;font-size:10.4px;font-weight:400;color:#ffffff;transform:scaleX(1.0560);transform-origin:left top;">(page down)</span>
<span class="t" style="left:990.50px;top:332.00px;font-size:11px;font-weight:700;color:#111;transform:scaleX(1.0685);transform-origin:left top;">...</span>
</body></html>
